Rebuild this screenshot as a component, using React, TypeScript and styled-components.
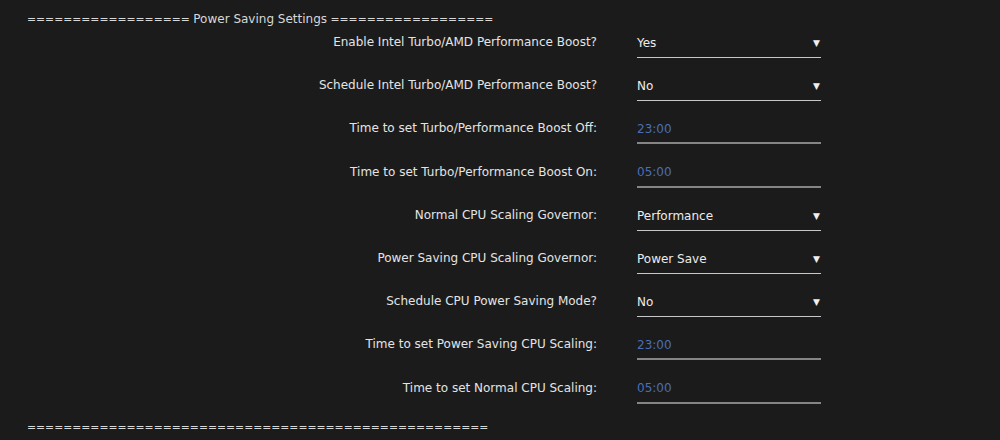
import React from 'react'
import styled, { createGlobalStyle } from 'styled-components'

const GlobalStyle = createGlobalStyle`
    html, body {
        margin: 0;
        padding: 0;
        background-color: #1b1b1b;
    }

    body {
        font-family: 'DejaVu Sans', sans-serif;
        font-size: 12px;
        color: #e2e2e2;
    }
`

const StyledPage = styled.div`
    width: 1000px;
    height: 440px;
    box-sizing: border-box;
    padding: 12px 0 0 27px;
    overflow: hidden;
`

const StyledDivider = styled.div`
    line-height: 14px;
    white-space: pre;
    color: #d8d8d8;
`

const StyledBar = styled.span`
    font-family: 'DejaVu Sans Condensed', 'DejaVu Sans', sans-serif;
`

const StyledForm = styled.div`
    display: grid;
    grid-template-columns: 570px 184px;
    column-gap: 40px;
    grid-auto-rows: 43.2px;
    margin: 2px 0 3px;
`

const StyledLabel = styled.label`
    text-align: right;
    padding-top: 7px;
    line-height: 14px;
    color: #e4e4e4;
`

const StyledControl = styled.div<{ $variant: 'select' | 'time' }>`
    display: flex;
    align-items: center;
    justify-content: space-between;
    height: 30px;
    box-sizing: border-box;
    padding-top: 1px;
    border-bottom: ${({ $variant }) => ($variant === 'select' ? '1px solid #c8c8c8' : '2px solid #858585')};
    color: ${({ $variant }) => ($variant === 'select' ? '#ececec' : '#4b6fb3')};
`

const StyledArrow = styled.span`
    font-size: 9px;
    color: #f0f0f0;
    margin-right: 1px;
`

type Field = { label: string; value: string; kind: 'select' | 'time' }

const fields: Field[] = [
    { label: 'Enable Intel Turbo/AMD Performance Boost?', value: 'Yes', kind: 'select' },
    { label: 'Schedule Intel Turbo/AMD Performance Boost?', value: 'No', kind: 'select' },
    { label: 'Time to set Turbo/Performance Boost Off:', value: '23:00', kind: 'time' },
    { label: 'Time to set Turbo/Performance Boost On:', value: '05:00', kind: 'time' },
    { label: 'Normal CPU Scaling Governor:', value: 'Performance', kind: 'select' },
    { label: 'Power Saving CPU Scaling Governor:', value: 'Power Save', kind: 'select' },
    { label: 'Schedule CPU Power Saving Mode?', value: 'No', kind: 'select' },
    { label: 'Time to set Power Saving CPU Scaling:', value: '23:00', kind: 'time' },
    { label: 'Time to set Normal CPU Scaling:', value: '05:00', kind: 'time' },
]

const bar = (n: number) => '='.repeat(n)

export default function App() {
    return (
        <>
            <GlobalStyle />
            <StyledPage>
                <StyledDivider>
                    <StyledBar>{bar(18)} </StyledBar>
                    Power Saving Settings
                    <StyledBar> {bar(18)}</StyledBar>
                </StyledDivider>
                <StyledForm>
                    {fields.map(({ label, value, kind }, index) => (
                        <React.Fragment key={index}>
                            <StyledLabel>{label}</StyledLabel>
                            <StyledControl $variant={kind}>
                                <span>{value}</span>
                                {kind === 'select' && <StyledArrow>▼</StyledArrow>}
                            </StyledControl>
                        </React.Fragment>
                    ))}
                </StyledForm>
                <StyledDivider>
                    <StyledBar>{bar(51)}</StyledBar>
                </StyledDivider>
            </StyledPage>
        </>
    )
}
